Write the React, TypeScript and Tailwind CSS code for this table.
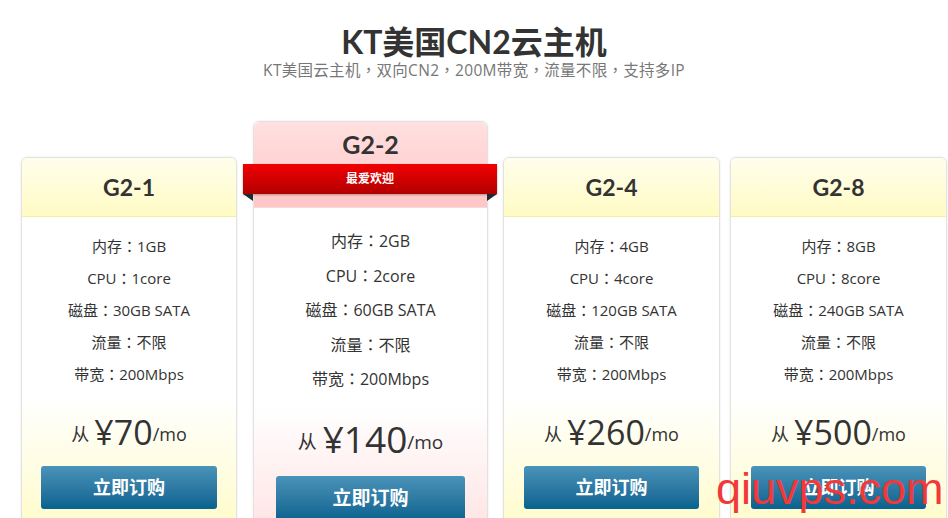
import React from 'react'

type Plan = {
  name: string
  ram: string
  cpu: string
  disk: string
  price: string
  popular?: boolean
}

const plans: Plan[] = [
  { name: 'G2-1', ram: '1GB', cpu: '1core', disk: '30GB SATA', price: '70' },
  { name: 'G2-2', ram: '2GB', cpu: '2core', disk: '60GB SATA', price: '140', popular: true },
  { name: 'G2-4', ram: '4GB', cpu: '4core', disk: '120GB SATA', price: '260' },
  { name: 'G2-8', ram: '8GB', cpu: '8core', disk: '240GB SATA', price: '500' },
]

const head = { fontFamily: 'Lato, "Noto Sans CJK SC", sans-serif' }
const body = { fontFamily: '"Open Sans", "Noto Sans CJK TC", sans-serif' }

function Features({ plan, big }: { plan: Plan; big?: boolean }) {
  const rows = [
    `内存：${plan.ram}`,
    `CPU：${plan.cpu}`,
    `磁盘：${plan.disk}`,
    '流量：不限',
    '带宽：200Mbps',
  ]
  return (
    <ul className={big ? 'pt-[16px] text-[16px] leading-[34.5px]' : 'pt-[13px] text-[15px] leading-[32px]'}>
      {rows.map((r) => (
        <li key={r} className="text-center text-[#333]">
          {r}
        </li>
      ))}
    </ul>
  )
}

function Card({ plan, width, mx }: { plan: Plan; width: string; mx: string }) {
  return (
    <div
      className={`${width} mt-[36px] h-[400px] shrink-0 rounded-t-md border border-[#e2e2e2] bg-gradient-to-b from-white from-[60%] to-[#fffbc6] to-[95%] shadow-[0_0_3px_rgba(0,0,0,0.08)]`}
      style={body}
    >
      <div className="flex h-[59px] items-center justify-center rounded-t-md border-b border-[#f3eca6] bg-gradient-to-b from-[#fffeec] to-[#fffbc4]">
        <span className="text-[23px] font-bold text-[#333]" style={head}>
          {plan.name}
        </span>
      </div>
      <Features plan={plan} />
      <div className="mt-[20px] flex h-[44px] items-end justify-center text-[#333]">
        <span className="mr-[5px] pb-[6px] text-[18px]">从</span>
        <span className="text-[34px] leading-[44px]">¥{plan.price}</span>
        <span className="pb-[6px] text-[18px]">/mo</span>
      </div>
      <div className={`mt-[12px] ${mx}`}>
        <button className="flex h-[43px] w-full items-center justify-center rounded-[3px] bg-gradient-to-b from-[#4a93b9] to-[#05628f] text-[18px] font-bold text-white">
          立即订购
        </button>
      </div>
    </div>
  )
}

function PopularCard({ plan }: { plan: Plan }) {
  return (
    <div
      className="relative h-[440px] w-[235px] shrink-0 rounded-t-md border border-[#e2e2e2] bg-gradient-to-b from-white from-[65%] to-[#ffe2e2] to-[95%] shadow-[0_0_3px_rgba(0,0,0,0.08)]"
      style={body}
    >
      <div className="h-[86px] rounded-t-md border-b border-[#f6dada] bg-gradient-to-b from-[#ffe0e0] to-[#ffc6c6] pt-[4px] text-center">
        <span className="text-[25px] font-bold text-[#333]" style={head}>
          {plan.name}
        </span>
      </div>
      {/* ribbon */}
      <div className="absolute left-[-11px] right-[-10px] top-[42px]">
        <div className="flex h-[30px] items-center justify-center bg-gradient-to-b from-[#f20000] to-[#b20000] text-[12px] font-bold text-white shadow-[0_1px_2px_rgba(0,0,0,0.3)]">
          最爱欢迎
        </div>
        <svg className="absolute left-0 top-[30px]" width="10" height="7" viewBox="0 0 10 7">
          <polygon points="0,0 10,0 10,7" fill="#1c2b30" />
        </svg>
        <svg className="absolute right-0 top-[30px]" width="10" height="7" viewBox="0 0 10 7">
          <polygon points="0,0 10,0 0,7" fill="#1c2b30" />
        </svg>
      </div>
      <Features plan={plan} big />
      <div className="mt-[18px] flex h-[48px] items-end justify-center text-[#333]">
        <span className="mr-[6px] pb-[6px] text-[19px]">从</span>
        <span className="text-[37px] leading-[48px]">¥{plan.price}</span>
        <span className="pb-[6px] text-[19px]">/mo</span>
      </div>
      <div className="mx-[22px] mt-[13px]">
        <button className="flex h-[45px] w-full items-center justify-center rounded-[3px] bg-gradient-to-b from-[#4a93b9] to-[#05628f] text-[19px] font-bold text-white">
          立即订购
        </button>
      </div>
    </div>
  )
}

export default function App() {
  return (
    <div className="relative h-[518px] w-[948px] overflow-hidden bg-white">
      <div className="pt-[22px] text-center">
        <h1 className="text-[32px] font-bold leading-[40px] text-[#333]" style={head}>
          KT美国CN2云主机
        </h1>
        <p className="mt-[-2px] text-[15.5px] leading-[20px] tracking-[0.3px] text-[#777]" style={body}>
          KT美国云主机，双向CN2，200M带宽，流量不限，支持多IP
        </p>
      </div>

      <div className="mt-[41px] flex items-start pl-[21px]">
        <Card plan={plans[0]} width="w-[216px]" mx="mx-[19px]" />
        <div className="w-[16px] shrink-0" />
        <PopularCard plan={plans[1]} />
        <div className="w-[15px] shrink-0" />
        <Card plan={plans[2]} width="w-[217px]" mx="mx-[20px]" />
        <div className="w-[10px] shrink-0" />
        <Card plan={plans[3]} width="w-[217px]" mx="mx-[20px]" />
      </div>

      <div
        className="absolute left-[716px] top-[466px] text-[45px] leading-none text-[#f23838]"
        style={{ fontFamily: '"Liberation Sans", Arial, sans-serif' }}
      >
        qiuvps.com
      </div>
    </div>
  )
}
